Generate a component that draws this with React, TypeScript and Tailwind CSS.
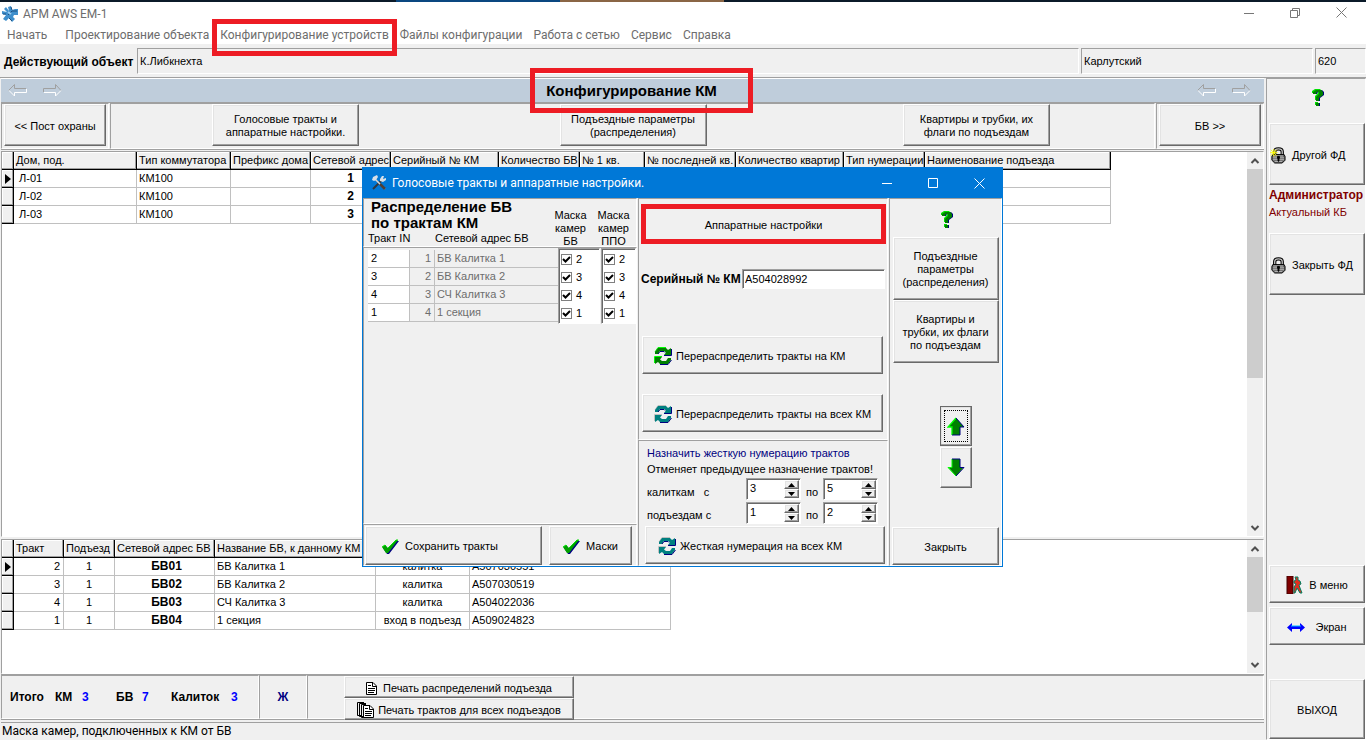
import type { ReactNode } from "react";

const RAISED =
  "border border-t-white border-l-white border-b-[#696969] border-r-[#696969] bg-[#f0f0f0] shadow-[inset_-1px_-1px_0_#a0a0a0,inset_1px_1px_0_#e3e3e3]";
const SUNKEN =
  "border border-t-[#a0a0a0] border-l-[#a0a0a0] border-b-white border-r-white shadow-[inset_1px_1px_0_#696969] bg-white";
const PANEL = "border border-t-[#a0a0a0] border-l-[#a0a0a0] border-b-white border-r-white";

function Btn({ children, className = "" }: { children: ReactNode; className?: string }) {
  return (
    <button type="button" className={`${RAISED} flex shrink-0 items-center pt-0.5 text-center leading-[13px] ${className}`}>
      {children}
    </button>
  );
}

function Refresh({ teal = false }: { teal?: boolean }) {
  const fill = teal ? "#008080" : "#008000";
  const light = teal ? "#c0c0c0" : "#00ff00";
  return (
    <svg width="18" height="20" viewBox="0 0 18 20" className="shrink-0" aria-hidden="true">
      <path d="M1 6L4 1.500H12" fill="none" stroke={light} />
      <path d="M1 8V6L4 2H12L14 4L17 2V9H10L12 6.500L10 5H6L4 8Z" fill={fill} />
      <path d="M4 8L6 5.500H10L11 6.500M10 9.500H17.500V3" fill="none" stroke="#000080" />
      <path d="M17 12V14L14 18H6L4 16L1 18V11H8L6 13.500L8 15H12L14 12Z" fill={fill} />
      <path d="M8 10.500H0.500V17" fill="none" stroke={light} />
      <path d="M6 18.500H14L17.500 14" fill="none" stroke="#000080" />
    </svg>
  );
}

function CheckMark() {
  return (
    <svg width="17" height="16" viewBox="0 0 17 16" className="shrink-0" aria-hidden="true">
      <path d="M1 9L4 7L6 10L14 2H17L7 15H5Z" fill="#000080" />
      <path d="M0 8L3 6L6 9L14 1H16L6 14H4Z" fill="#00a000" />
      <path d="M0 8L3 6L4 7M6 9L14 1H16" fill="none" stroke="#00e000" />
    </svg>
  );
}

function Question() {
  const d = "M1 5V3L4 1H9L11 3V6L7 9V12H4V8L7 5V3H5L4 5ZM4 14H7V17H4Z";
  return (
    <svg width="13" height="18" viewBox="0 0 13 18" aria-hidden="true">
      <path d={d} fill="#000080" transform="translate(1 0)" />
      <path d={d} fill="#00e000" transform="translate(-1 -1)" />
      <path d={d} fill="#008000" />
    </svg>
  );
}

function Lock({ open = false }: { open?: boolean }) {
  return (
    <svg width="16" height="17" viewBox="0 0 17 18" className="shrink-0" aria-hidden="true">
      <path d="M5 9V5Q5 2 9 2Q13 2 13 5V9" fill="none" stroke="#000" strokeWidth="3.500" />
      <path d="M5 9V5Q5 2 9 2Q13 2 13 5V9" fill="none" stroke="#c0c0c0" strokeWidth="1.400" />
      <path d="M3 8H15L16 10V14L13 17H5L2 14V10Z" fill="#606060" stroke="#000" />
      <path d="M3.500 9.500H14M3 11.500H15M3 13.500H15M5 15.500H13" stroke="#c0c0c0" />
      <path d="M8 10H10V12H9.500V15H8.500V12H8Z" fill="#000" stroke="#000" />
      {open && <path d="M0 6H8M4 2V10M1 3L7 9M7 3L1 9" stroke="#ffff00" />}
    </svg>
  );
}

function EmbossArrow({ right = false }: { right?: boolean }) {
  return (
    <svg width="19" height="13" viewBox="0 0 19 13" aria-hidden="true">
      {right ? (
        <>
          <path d="M0.500 8V4.500H12.500V0.500L18 6.500" fill="none" stroke="#a0a0a0" />
          <path d="M1 8.500H12.500V12L18 6.500" fill="none" stroke="#fff" />
        </>
      ) : (
        <>
          <path d="M18 4.500H6.500V0.500L0.500 6.500" fill="none" stroke="#a0a0a0" />
          <path d="M1 6.500L6.500 12V8.500H18.500V5" fill="none" stroke="#fff" />
        </>
      )}
    </svg>
  );
}

function BlockArrow({ down = false }: { down?: boolean }) {
  return (
    <svg width="18" height="19" viewBox="0 0 18 19" aria-hidden="true">
      {down ? (
        <>
          <path d="M5 1H13V9H17L9 18L1 9H5Z" fill="#008000" />
          <path d="M5 1V9.500H1L9 18" fill="none" stroke="#00ff00" />
          <path d="M5 1H13V9.500H17L9 18" fill="none" stroke="#000080" />
        </>
      ) : (
        <>
          <path d="M9 1L17 10H13V18H5V10H1Z" fill="#008000" />
          <path d="M5 18V10H1L9 1" fill="none" stroke="#00ff00" strokeWidth="1.300" />
          <path d="M9 1L17 10H13V18H5" fill="none" stroke="#000080" />
        </>
      )}
    </svg>
  );
}

function Doc({ many = false }: { many?: boolean }) {
  return (
    <svg width={many ? 17 : 11} height={many ? 16 : 13} viewBox={many ? "0 0 17 16" : "0 0 11 13"} className="shrink-0" aria-hidden="true">
      {many && <path d="M4.500 13.500H0.500V0.500H7M6.500 14.500H2.500V1.500H9M8 15.500H4.500V2.500H9" fill="none" stroke="#000" />}
      <g transform={many ? "translate(6 3)" : ""}>
        <path d="M0.500 0.500H7L10.500 4V12.500H0.500Z" fill="#fff" stroke="#000" />
        <path d="M6.500 0.500V4.500H10M2 3.500H5M2 6.500H9M2 8.500H9M2 10.500H8" fill="none" stroke="#000" />
      </g>
    </svg>
  );
}

function Chevron({ down = false }: { down?: boolean }) {
  return (
    <svg width="10" height="8" viewBox="0 0 10 8" aria-hidden="true">
      <path d={down ? "M1.500 2L5 5.500L8.500 2" : "M1.500 6L5 2.500L8.500 6"} fill="none" stroke="#505050" strokeWidth="2" />
    </svg>
  );
}

function Scrollbar({ thumb }: { thumb: string }) {
  return (
    <div className="flex w-4 shrink-0 flex-col bg-[#f0f0f0]">
      <button type="button" aria-label="Вверх" className="flex h-[17px] items-center justify-center">
        <Chevron />
      </button>
      <div className={`bg-[#cdcdcd] ${thumb}`} />
      <div className="flex-1" />
      <button type="button" aria-label="Вниз" className="flex h-[17px] items-center justify-center">
        <Chevron down />
      </button>
    </div>
  );
}

type Col = { title: string; width: string; cell: string };

function DataTable({ cols, rows, width }: { cols: Col[]; rows: string[][]; width: string }) {
  return (
    <table className={`table-fixed border-separate border-spacing-0 self-start ${width}`}>
      <thead>
        <tr className="h-[18px]">
          <th className="w-3 border-r border-b border-black bg-[#f0f0f0] p-0 shadow-[inset_-1px_-1px_0_#a0a0a0,inset_1px_1px_0_#ffffff]" />
          {cols.map((c) => (
            <th
              key={c.title}
              className={`overflow-hidden border-r border-b border-black bg-[#f0f0f0] p-0 pl-0.5 text-left font-normal whitespace-nowrap shadow-[inset_-1px_-1px_0_#a0a0a0,inset_1px_1px_0_#ffffff] ${c.width}`}
            >
              {c.title}
            </th>
          ))}
        </tr>
      </thead>
      <tbody>
        {rows.map((r, i) => (
          <tr key={i} className="h-[18px]">
            <td className="border-r border-b border-black bg-[#f0f0f0] p-0 shadow-[inset_-1px_-1px_0_#a0a0a0,inset_1px_1px_0_#ffffff]">
              {i === 0 && (
                <svg width="7" height="10" viewBox="0 0 7 10" className="ml-[3px]" aria-hidden="true">
                  <path d="M0 0L6 5L0 10Z" fill="#000" />
                </svg>
              )}
            </td>
            {cols.map((c, j) => (
              <td key={c.title} className={`border-r border-b border-[#c0c0c0] p-0 whitespace-nowrap ${c.cell}`}>
                {r[j]}
              </td>
            ))}
          </tr>
        ))}
      </tbody>
    </table>
  );
}

const KM_COLS: Col[] = [
  { title: "Дом, под.", width: "w-[123px]", cell: "pl-[5px]" },
  { title: "Тип коммутатора", width: "w-[94px]", cell: "pl-0.5" },
  { title: "Префикс дома", width: "w-[80px]", cell: "pl-0.5" },
  { title: "Сетевой адрес", width: "w-[80px]", cell: "text-center text-[12px] font-bold" },
  { title: "Серийный № КМ", width: "w-[108px]", cell: "pl-0.5" },
  { title: "Количество БВ", width: "w-[81px]", cell: "pl-0.5" },
  { title: "№ 1 кв.", width: "w-[65px]", cell: "pl-0.5" },
  { title: "№ последней кв.", width: "w-[91px]", cell: "pl-0.5" },
  { title: "Количество квартир", width: "w-[108px]", cell: "pl-0.5" },
  { title: "Тип нумерации", width: "w-[81px]", cell: "pl-0.5" },
  { title: "Наименование подъезда", width: "w-[186px]", cell: "pl-0.5" },
];
const KM_ROWS = [
  ["Л-01", "КМ100", "", "1"],
  ["Л-02", "КМ100", "", "2"],
  ["Л-03", "КМ100", "", "3"],
];

const BV_COLS: Col[] = [
  { title: "Тракт", width: "w-[50px]", cell: "pr-[3px] text-right" },
  { title: "Подъезд", width: "w-[51px]", cell: "text-center" },
  { title: "Сетевой адрес БВ", width: "w-[100px]", cell: "pl-1 text-center text-[12px] font-bold" },
  { title: "Название БВ, к данному КМ", width: "w-[161px]", cell: "pl-0.5" },
  { title: "Тип БВ", width: "w-[94px]", cell: "text-center" },
  { title: "Серийный №", width: "w-[201px]", cell: "pl-0.5" },
];
const BV_ROWS = [
  ["2", "1", "БВ01", "БВ Калитка 1", "калитка", "A507030551"],
  ["3", "1", "БВ02", "БВ Калитка 2", "калитка", "A507030519"],
  ["4", "1", "БВ03", "СЧ Калитка 3", "калитка", "A504022036"],
  ["1", "1", "БВ04", "1 секция", "вход в подъезд", "A509024823"],
];

const TRACTS = [
  ["2", "БВ Калитка 1"],
  ["3", "БВ Калитка 2"],
  ["4", "СЧ Калитка 3"],
  ["1", "1 секция"],
];

function MaskList({ name, className }: { name: string; className: string }) {
  return (
    <div className={`${SUNKEN} shrink-0 pt-px pb-px ${className}`}>
      {TRACTS.map(([n]) => (
        <label key={n} className="flex h-[18px] items-center gap-1 pl-0.5">
          <span className="grid size-[11px]">
            <input
              type="checkbox"
              defaultChecked
              aria-label={`${name} ${n}`}
              className="col-start-1 row-start-1 size-[11px] appearance-none border border-[#808080] bg-white"
            />
            <svg width="11" height="11" viewBox="0 0 11 11" className="pointer-events-none col-start-1 row-start-1" aria-hidden="true">
              <path d="M2 5L4.500 7.500L9 3" fill="none" stroke="#000" strokeWidth="2" />
            </svg>
          </span>
          {n}
        </label>
      ))}
    </div>
  );
}

function Spin({ value, label }: { value: string; label: string }) {
  return (
    <div className={`${SUNKEN} flex h-[22px] w-[55px] p-px`}>
      <input aria-label={label} defaultValue={value} className="h-4 w-full min-w-0 pl-0.5 outline-none" />
      <div className="flex w-[15px] shrink-0 flex-col">
        <button type="button" aria-label={`${label}: больше`} className={`${RAISED} flex h-[9px] items-center justify-center`}>
          <svg width="7" height="4" viewBox="0 0 7 4" aria-hidden="true">
            <path d="M0 4L3.500 0L7 4Z" />
          </svg>
        </button>
        <button type="button" aria-label={`${label}: меньше`} className={`${RAISED} flex h-[9px] items-center justify-center`}>
          <svg width="7" height="4" viewBox="0 0 7 4" aria-hidden="true">
            <path d="M0 0L3.500 4L7 0Z" />
          </svg>
        </button>
      </div>
    </div>
  );
}

function Dialog() {
  return (
    <section
      role="dialog"
      aria-label="Голосовые тракты и аппаратные настройки."
      className="absolute top-[167px] left-[362px] flex h-[400px] w-[641px] flex-col border border-[#0078d7] bg-[#f0f0f0]"
    >
      <header className="flex h-[30px] shrink-0 items-center bg-[#0078d7] pl-2 text-white">
        <svg width="16" height="16" viewBox="0 0 16 16" aria-hidden="true">
          <path d="M2 14L11 5" stroke="#303840" strokeWidth="2" />
          <path d="M9 4L11 1H13L12 4L15 3V5L12 7L9 6Z" fill="#d8e0e8" />
          <path d="M4 4L14 14" stroke="#e0d8d0" strokeWidth="1.500" />
          <path d="M1 5L2 2L6 0L7 2L5 5L3 6Z" fill="#d8e0e8" />
          <path d="M9 9L14 14" stroke="#504038" strokeWidth="2.500" />
        </svg>
        <h2 className="flex-1 pl-[5px] font-[Roboto,sans-serif] text-[12px] font-normal whitespace-nowrap">
          Голосовые тракты и аппаратные настройки.
        </h2>
        <button type="button" aria-label="Свернуть" className="flex w-[46px] justify-center">
          <svg width="10" height="10" aria-hidden="true"><path d="M0 5.500H10" stroke="#fff" /></svg>
        </button>
        <button type="button" aria-label="Развернуть" className="flex w-[46px] justify-center">
          <svg width="10" height="10" aria-hidden="true"><path d="M0.500 0.500H9.500V9.500H0.500Z" fill="none" stroke="#fff" /></svg>
        </button>
        <button type="button" aria-label="Закрыть окно" className="flex w-[46px] justify-center">
          <svg width="11" height="11" aria-hidden="true"><path d="M0.500 0.500L10.500 10.500M10.500 0.500L0.500 10.500" stroke="#fff" /></svg>
        </button>
      </header>
      <div className="flex min-h-0 flex-1">
        <div className="flex w-[274px] shrink-0 flex-col">
          <div className={`${PANEL} flex h-[49px] shrink-0`}>
            <div className="flex-1 pl-1">
              <h3 className="pl-[3px] text-[15px] leading-[16px] font-bold whitespace-nowrap">
                Распределение БВ
                <br />
                по трактам КМ
              </h3>
              <div className="flex leading-[15px]">
                <span className="w-[67px]">Тракт IN</span>
                <span>Сетевой адрес БВ</span>
              </div>
            </div>
            <div className="w-[41px] pt-2.5 text-center leading-[13px]">
              Маска
              <br />
              камер
              <br />
              БВ
            </div>
            <div className="w-[45px] pt-2.5 text-center leading-[13px]">
              Маска
              <br />
              камер
              <br />
              ППО
            </div>
          </div>
          <div className={`${PANEL} flex flex-1 items-start pl-1`}>
            <div className="w-[190px] shrink-0 pt-0.5">
              <table className="w-full table-fixed border-separate border-spacing-0">
                <tbody>
                  {TRACTS.map(([n, name], i) => (
                    <tr key={n} className="h-[18px]">
                      <td className="w-[42px] border-r border-b border-[#c0c0c0] bg-white p-0 pl-[3px]">{n}</td>
                      <td className="w-[25px] border-r border-b border-[#c0c0c0] p-0 pr-[3px] text-right text-[#6d6d6d]">{i + 1}</td>
                      <td className="border-b border-[#c0c0c0] p-0 pl-0.5 text-[#6d6d6d]">{name}</td>
                    </tr>
                  ))}
                </tbody>
              </table>
            </div>
            <MaskList name="Маска камер БВ" className="w-[42px]" />
            <MaskList name="Маска камер ППО" className="ml-px w-[35px]" />
          </div>
          <div className={`${PANEL} flex h-[42px] shrink-0 justify-between pt-px pr-1 pl-px`}>
            <Btn className="h-[39px] w-[177px] gap-1.5 pl-4">
              <CheckMark />
              Сохранить тракты
            </Btn>
            <Btn className="h-[39px] w-[83px] justify-center gap-1.5">
              <CheckMark />
              Маски
            </Btn>
          </div>
        </div>

        <div className="ml-px flex w-[250px] shrink-0 flex-col">
          <div className={`${PANEL} flex flex-1 flex-col pt-[5px] pl-0.5`}>
            <button type="button" className="h-10 w-[245px] border-[5px] border-[#ed1c24] pt-0.5">
              Аппаратные настройки
            </button>
            <div className="mt-[25px] flex items-center">
              <label htmlFor="serial" className="w-[101px] text-[12px] font-bold whitespace-nowrap">
                Серийный № КМ
              </label>
              <input id="serial" defaultValue="A504028992" className={`${SUNKEN} h-5 w-[143px] pl-0.5 outline-none`} />
            </div>
            <Btn className="mt-[47px] ml-px h-[38px] w-[241px] gap-1 pl-[11px]">
              <Refresh />
              Перераспределить тракты на КМ
            </Btn>
            <Btn className="mt-5 ml-px h-[38px] w-[241px] gap-1 pl-[11px]">
              <Refresh teal />
              Перераспределить тракты на всех КМ
            </Btn>
          </div>
          <div className={`${PANEL} flex h-[126px] shrink-0 flex-col pt-1 pl-1.5`}>
            <div className="pl-0.5">
              <p className="leading-[16px] text-[#000080]">Назначить жесткую нумерацию трактов</p>
              <p className="leading-[16px]">Отменяет предыдущее назначение трактов!</p>
              <div className="mt-px flex items-center">
                <span className="w-[99px] pt-1.5 whitespace-pre">калиткам   с</span>
                <Spin value="3" label="Калиткам с" />
                <span className="w-[22px] pt-1.5 text-center">по</span>
                <Spin value="5" label="Калиткам по" />
              </div>
              <div className="mt-0.5 flex items-center">
                <span className="w-[99px] pt-1">подъездам с</span>
                <Spin value="1" label="Подъездам с" />
                <span className="w-[22px] pt-1 text-center">по</span>
                <Spin value="2" label="Подъездам по" />
              </div>
            </div>
            <Btn className="mt-0.5 h-[38px] w-[240px] gap-1 pl-3">
              <Refresh teal />
              Жесткая нумерация на всех КМ
            </Btn>
          </div>
        </div>

        <div className={`${PANEL} ml-px flex flex-1 flex-col items-center`}>
          <div className="flex h-[38px] items-center pt-1 pl-[3px]">
            <Question />
          </div>
          <Btn className="h-[63px] w-[106px] justify-center">
            Подъездные
            <br />
            параметры
            <br />
            (распределения)
          </Btn>
          <Btn className="h-[63px] w-[106px] justify-center">
            Квартиры и
            <br />
            трубки, их флаги
            <br />
            по подъездам
          </Btn>
          <button type="button" aria-label="Выше" className={`${RAISED} mt-[43px] ml-5 h-10 w-8 p-[3px] outline outline-1 -outline-offset-1 outline-[#696969]`}>
            <span className="flex h-full items-center justify-center border border-dotted border-black">
              <BlockArrow />
            </span>
          </button>
          <button type="button" aria-label="Ниже" className={`${RAISED} mt-px ml-5 flex h-[41px] w-8 items-center justify-center`}>
            <BlockArrow down />
          </button>
          <div className="flex-1" />
          <Btn className="h-[38px] w-[107px] justify-center">Закрыть</Btn>
        </div>
      </div>
    </section>
  );
}

const MENU = ["Начать", "Проектирование объекта", "Конфигурирование устройств", "Файлы конфигурации", "Работа с сетью", "Сервис", "Справка"];

export default function App() {
  return (
    <div className="relative flex h-screen min-h-[740px] flex-col overflow-hidden bg-[#f0f0f0] font-['Liberation_Sans',Arial,sans-serif] text-[11px] leading-[13px] text-black">
      <div className="flex h-0.5 shrink-0 bg-[#0b1a29]">
        <div className="w-[29%]" />
        <div className="w-[12%] bg-[#0a4780]" />
        <div className="w-[12%] bg-[#8a6545]" />
      </div>
      <header className="shrink-0 bg-white font-[Roboto,sans-serif] text-[12px] text-[#6d6d6d]">
        <div className="flex h-[23px] items-center pl-0.5">
          <svg width="16" height="16" viewBox="0 0 16 16" aria-hidden="true">
            <path d="M7 5L6 1L9 0L10 4L13 3H16V9H12L11 11L13 13L10 16L7 12L4 15L1 13L4 9L0 8V5L5 6L2 3L4 1Z" fill="#3f8fcc" />
            <path d="M6 9L10 5H15M9 1L10 4M7 12L10 15M1 8H4" fill="none" stroke="#1d4f80" />
            <path d="M6 6L9 8" stroke="#9cd0f4" strokeWidth="2" />
          </svg>
          <h1 className="flex-1 pt-0.5 pl-[5px] font-normal">АРМ AWS EM-1</h1>
          <button type="button" aria-label="Свернуть" className="flex w-[46px] justify-center">
            <svg width="10" height="10" aria-hidden="true"><path d="M0 4.500H10" stroke="#777" /></svg>
          </button>
          <button type="button" aria-label="Восстановить" className="flex w-[46px] justify-center">
            <svg width="10" height="12" viewBox="0 0 10 12" aria-hidden="true"><path d="M0.500 2.500H7.500V9.500H0.500ZM2.500 2.500V0.500H9.500V7.500H7.500" fill="none" stroke="#777" /></svg>
          </button>
          <button type="button" aria-label="Закрыть" className="mr-0.5 flex w-[46px] justify-center">
            <svg width="11" height="13" viewBox="0 0 11 13" aria-hidden="true"><path d="M0.500 0.500L10.500 10.500M10.500 0.500L0.500 10.500" stroke="#777" /></svg>
          </button>
        </div>
        <nav className="flex h-[19px] items-center pt-0.5 pl-[7px] whitespace-nowrap">
          {MENU.map((m, i) => (
            <button type="button" key={m} className={i === 0 ? "relative mr-[18px]" : "relative mr-[11px]"}>
              {m}
              {i === 2 && <span className="absolute -top-2.5 -right-2 -bottom-3.5 -left-2 z-10 border-[5px] border-[#ed1c24]" />}
            </button>
          ))}
        </nav>
      </header>

      <div className="flex h-[34px] shrink-0 items-center border-b border-[#a0a0a0] pl-1">
        <span className="w-[133px] pt-1 text-[12px] font-bold whitespace-nowrap">Действующий объект</span>
        <div className={`${PANEL} h-[26px] flex-1 pt-1.5 pl-0.5`}>К.Либкнехта</div>
        <div className={`${PANEL} ml-0.5 h-[26px] w-[232px] pt-1.5 pl-0.5`}>Карлутский</div>
        <div className={`${PANEL} ml-0.5 h-[26px] w-[51px] pt-1.5 pl-0.5`}>620</div>
      </div>

      <div className="flex min-h-0 flex-1">
        <main className="flex min-w-0 flex-1 flex-col pl-px">
          <div className="flex h-[25px] shrink-0 items-center border-t border-b border-t-white border-b-[#a0a0a0] bg-[#bfcddb] px-[7px]">
            <div className="flex flex-1 gap-4">
              <EmbossArrow />
              <EmbossArrow right />
            </div>
            <h2 className="relative ml-1 text-[15px] font-bold">
              Конфигурирование КМ
              <span className="absolute -top-4 -right-9 -bottom-4 -left-4 z-10 border-[5px] border-[#ed1c24]" />
            </h2>
            <div className="flex flex-1 justify-end gap-4 pr-1.5">
              <EmbossArrow />
              <EmbossArrow right />
            </div>
          </div>
          <div className="flex h-[47px] shrink-0 border-b border-[#a0a0a0]">
            <div className={`${PANEL} w-[108px] pl-0.5`}>
              <Btn className="h-[42px] w-[102px] justify-center">&lt;&lt; Пост охраны</Btn>
            </div>
            <div className={`${PANEL} ml-px flex flex-1 justify-between pr-[104px] pl-[101px]`}>
              <Btn className="h-[42px] w-[147px] justify-center">
                Голосовые тракты и
                <br />
                аппаратные настройки.
              </Btn>
              <Btn className="ml-1 h-[42px] w-[147px] justify-center">
                Подъездные параметры
                <br />
                (распределения)
              </Btn>
              <Btn className="h-[42px] w-[147px] justify-center">
                Квартиры и трубки, их
                <br />
                флаги по подъездам
              </Btn>
            </div>
            <div className={`${PANEL} ml-px flex w-[108px] pl-0.5`}>
              <Btn className="h-[42px] w-[102px] justify-center">БВ &gt;&gt;</Btn>
            </div>
          </div>
          <div className={`${PANEL} mt-px flex min-h-0 flex-1 justify-between overflow-hidden bg-white`}>
            <DataTable cols={KM_COLS} rows={KM_ROWS} width="w-[1109px]" />
            <Scrollbar thumb="h-[209px]" />
          </div>
          <div className={`${PANEL} mt-0.5 flex h-[135px] shrink-0 justify-between bg-white`}>
            <DataTable cols={BV_COLS} rows={BV_ROWS} width="w-[669px]" />
            <Scrollbar thumb="h-[55px]" />
          </div>
          <div className="flex h-[46px] shrink-0 border-t border-b border-[#a0a0a0] font-bold">
            <div className={`${PANEL} flex w-[258px] items-center pl-2 text-[12px]`}>
              <span className="w-[45px]">Итого</span>
              <span className="w-[27px]">КМ</span>
              <span className="w-[34px] text-[#0000ff]">3</span>
              <span className="w-[26px]">БВ</span>
              <span className="w-[29px] text-[#0000ff]">7</span>
              <span className="w-[60px]">Калиток</span>
              <span className="text-[#0000ff]">3</span>
            </div>
            <div className={`${PANEL} flex w-12 items-center justify-center text-[12px] text-[#000080]`}>Ж</div>
            <div className={`${PANEL} flex-1 pl-9 font-normal`}>
              <Btn className="h-[22px] w-[230px] justify-center gap-1.5">
                <Doc />
                Печать распределений подъезда
              </Btn>
              <Btn className="h-[22px] w-[230px] justify-center gap-1">
                <Doc many />
                Печать трактов для всех подъездов
              </Btn>
            </div>
          </div>
          <footer className="mt-0.5 flex h-[18px] shrink-0 items-center border-t border-[#a0a0a0] pl-px font-[Roboto,sans-serif] text-[12px]">
            Маска камер, подключенных к КМ от БВ
          </footer>
        </main>

        <aside className={`${PANEL} ml-0.5 flex w-[100px] shrink-0 flex-col pl-0.5`}>
          <div className="flex h-11 shrink-0 items-center justify-center pb-1.5 pl-0.5">
            <Question />
          </div>
          <Btn className="h-[62px] w-[96px] gap-1.5">
            <Lock open />
            Другой ФД
          </Btn>
          <p className="mt-1 text-[12px] font-bold whitespace-nowrap text-[#800000]">Администратор</p>
          <p className="mt-1 text-[#800000]">Актуальный КБ</p>
          <Btn className="mt-3.5 h-[62px] w-[96px] gap-1.5">
            <Lock />
            Закрыть ФД
          </Btn>
          <div className="flex-1" />
          <Btn className="h-[38px] w-[96px] justify-center gap-1.5">
            <svg width="17" height="18" viewBox="0 0 17 18" aria-hidden="true">
              <path d="M1 0H7V18H1Z" fill="#800000" stroke="#400000" />
              <path d="M9 1H12V4L14 5L15 8L13 9L14 12L16 17H14L11 12L9 17H8V11L10 8L8 7V5L10 4Z" fill="#e03020" stroke="#008060" />
            </svg>
            В меню
          </Btn>
          <Btn className="mt-1 h-[38px] w-[96px] justify-center gap-2.5">
            <svg width="18" height="9" viewBox="0 0 18 9" aria-hidden="true">
              <path d="M0 4.500L5 0V3H13V0L18 4.500L13 9V6H5V9Z" fill="#0000ff" />
              <path d="M4 3H14" stroke="#00c0ff" />
            </svg>
            Экран
          </Btn>
          <Btn className="mt-[34px] h-[60px] w-[96px] justify-center">ВЫХОД</Btn>
        </aside>
      </div>

      <Dialog />
    </div>
  );
}
